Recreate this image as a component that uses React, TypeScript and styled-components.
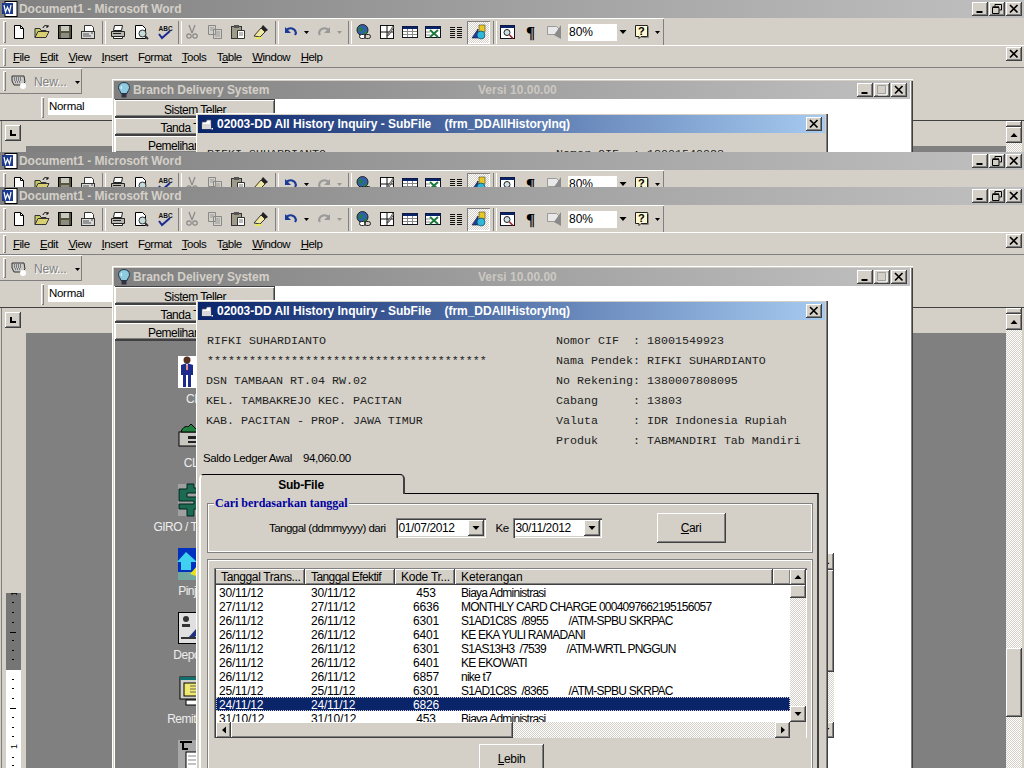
import React from "react";
import styled, { createGlobalStyle, css } from "styled-components";

const FACE = "#d4d0c8";
const GRAY = "#808080";
const UI = `"Liberation Sans", Arial, sans-serif`;

const Global = createGlobalStyle`
  html, body { margin: 0; padding: 0; background: ${FACE}; }
  * { box-sizing: border-box; }
`;

const raised = css`
  background: ${FACE};
  box-shadow: inset -1px -1px 0 #404040, inset 1px 1px 0 #fff, inset -2px -2px 0 ${GRAY};
`;
const dither = css`
  background: repeating-conic-gradient(${FACE} 0 25%, #fff 0 50%) 0 0 / 2px 2px;
`;

const Screen = styled.div`
  width: 1024px; height: 768px; overflow: hidden; display: flex; flex-direction: column;
  font-family: ${UI}; font-size: 12px; color: #000;
`;
const Slice = styled.div<{ $h: number }>`
  height: ${(p) => p.$h}px; flex: none; overflow: hidden; position: relative;
`;
const Word = styled.div`
  position: relative; width: 1024px; height: 768px; background: ${FACE}; display: flex; flex-direction: column;
`;
const TitleBar = styled.div`
  height: 18px; flex: none; display: flex; align-items: center; padding: 0 2px 0 2px;
  background: linear-gradient(90deg, #808080 0%, #c0c0c0 100%);
`;
const TitleText = styled.span`
  margin-left: 1px; font-weight: 700; font-size: 12px; color: ${FACE}; letter-spacing: -0.05px;
  flex: 1; white-space: pre;
`;
const BtnGroup = styled.div`
  display: flex; gap: 1px;
`;
const WinBtn = styled.div`
  width: 16px; height: 14px; display: flex; align-items: center; justify-content: center; ${raised}
`;
const ToolRow = styled.div`
  height: 28px; flex: none; display: flex; border-bottom: 1px solid #fff;
`;
const Toolbar = styled.div`
  width: 664px; height: 27px; display: flex; align-items: center; padding-left: 7px; position: relative;
  border-top: 1px solid #fff; box-shadow: inset -1px 0 0 ${GRAY};
`;
const Grip = styled.i<{ $h: number; $x: number }>`
  position: absolute; left: ${(p) => p.$x}px; top: 2px; width: 3px; height: ${(p) => p.$h}px;
  background: ${FACE}; box-shadow: inset 1px 1px 0 #fff, inset -1px -1px 0 ${GRAY};
`;
const Tool = styled.div<{ $w?: number; $pressed?: boolean }>`
  width: ${(p) => p.$w ?? 23}px; height: 23px; flex: none; display: flex; align-items: center; justify-content: center;
  ${(p) => p.$pressed && css`
    ${dither}
    box-shadow: inset 1px 1px 0 ${GRAY}, inset -1px -1px 0 #fff;
  `}
`;
const Pilcrow = styled.span`
  font-family: "Liberation Serif", serif; font-weight: 700; font-size: 17px; line-height: 1;
`;
const Sep = styled.i<{ $w?: number }>`
  width: ${(p) => p.$w ?? 7}px; height: 23px; flex: none; position: relative;
  &::after {
    content: ""; position: absolute; left: 3px; top: 0; bottom: 0; width: 2px;
    border-left: 1px solid ${GRAY}; border-right: 1px solid #fff;
  }
`;
const ZoomBox = styled.div`
  width: 60px; height: 17px; margin: 0 2px 0 3px; background: #fff; display: flex; align-items: center;
  font-size: 12px; padding-left: 1px; flex: none; justify-content: space-between; padding-right: 0;
`;
const ZoomArrow = styled.span`
  width: 11px; height: 17px; background: ${FACE}; display: flex; align-items: center; justify-content: center;
`;
const MenuRow = styled.div`
  height: 22px; flex: none; display: flex; align-items: center; padding-left: 13px; gap: 10.5px; position: relative;
  border-bottom: 1px solid ${GRAY}; font-size: 11.5px;
`;
const MenuItem = styled.span`
  letter-spacing: -0.5px; color: #000;
`;
const DocClose = styled(WinBtn)`
  position: absolute; right: 2px; top: 1px;
`;
const ToolbarRowThree = styled.div`
  height: 27px; flex: none; display: flex;
`;
const NewBar = styled.div`
  width: 82px; height: 26px; display: flex; align-items: center; padding-left: 11px; gap: 7px; position: relative;
  border-top: 1px solid #fff; box-shadow: inset -1px -1px 0 ${GRAY};
`;
const NewText = styled.span`
  color: ${GRAY}; text-shadow: 1px 1px 0 #fff; font-size: 12px; width: 34px; letter-spacing: -0.1px;
`;
const StyleRow = styled.div`
  height: 26px; flex: none; padding-left: 40px; border-bottom: 1px solid #404040; display: flex; align-items: flex-start; position: relative;
`;
const StyleBox = styled.div`
  margin: 3px 0 0 8px; width: 110px; height: 17px; background: #fff; padding-left: 1px; line-height: 17px; font-size: 11.5px; letter-spacing: -0.3px;
`;
const Body = styled.div`
  flex: 1; display: flex; min-height: 0; margin-left: 1px; border-left: 1px solid ${GRAY};
`;
const MainCol = styled.div`
  flex: 1; display: flex; flex-direction: column; min-width: 0;
`;
const RulerRow = styled.div`
  height: 25px; flex: none; padding: 4px 0 0 3px;
`;
const TabStop = styled.div`
  width: 16px; height: 16px; display: flex; align-items: center; justify-content: center; ${raised}
`;
const CanvasRow = styled.div`
  flex: 1; display: flex; min-height: 0;
`;
const RulerCol = styled.div`
  width: 24px; flex: none; padding: 260px 5px 0 4px;
`;
const Doc = styled.div`
  flex: 1; background: ${GRAY};
`;
const DocBar = styled.div`
  width: 18px; flex: none; padding-right: 2px; display: flex; flex-direction: column;
`;
const Split = styled.div`
  height: 6px; flex: none; ${raised}
`;
const ArrowBtn = styled.div<{ $h?: number; $w?: number }>`
  width: ${(p) => p.$w ?? 16}px; height: ${(p) => p.$h ?? 16}px; flex: none; display: flex; align-items: center; justify-content: center; ${raised}
`;
const Track = styled.div<{ $h?: number }>`
  flex: ${(p) => (p.$h ? "none" : 1)}; height: ${(p) => (p.$h ? `${p.$h}px` : "auto")}; ${dither}
`;
const Thumb = styled.div<{ $h?: number; $w?: number }>`
  flex: none; height: ${(p) => (p.$h ? `${p.$h}px` : "100%")}; width: ${(p) => (p.$w ? `${p.$w}px` : "100%")}; ${raised}
`;

/* Branch Delivery System */
const Branch = styled.div`
  position: absolute; left: 112px; top: 79px; width: 801px; height: 720px; background: #fff; padding: 2px 2px 0 2px;
  box-shadow: inset 1px 1px 0 #fff, inset 2px 2px 0 ${FACE}, inset -1px 0 0 #404040, inset -2px 0 0 ${GRAY};
`;
const BranchTitle = styled.div`
  height: 18px; display: flex; align-items: center; padding-left: 2px; position: relative;
  background: linear-gradient(90deg, #808080 0%, #c0c0c0 100%);
  margin-right: 1px;
`;
const BranchName = styled(TitleText)`
  margin-left: 1px;
`;
const Version = styled.span`
  position: absolute; left: 364px; top: 2px; font-weight: 700; color: #d4d0c8; font-size: 12px; opacity: .85;
`;
const BranchBtns = styled(BtnGroup)`
  margin-right: 3px; gap: 1px;
`;
const SidePanel = styled.div`
  width: 160px; display: flex; flex-direction: column; height: 100%;
  margin-left: 1px; background: ${GRAY}; padding-top: 0; border-top: 1px solid #404040;
`;
const SideButton = styled.div`
  height: 18px; flex: none; text-align: center; line-height: 20px; font-size: 12px; letter-spacing: -0.5px; white-space: nowrap; overflow: hidden; ${raised}
  border-bottom: 1px solid #404040;
`;
const IconList = styled.div`
  display: flex; flex-direction: column; align-items: center; padding-top: 15px;
`;
const IconItem = styled.div`
  height: 64px; width: 130px; flex: none; display: flex; flex-direction: column; align-items: center;
`;
const IconLabel = styled.div`
  margin-top: 4px; line-height: 14px; color: #eee; white-space: nowrap; font-size: 12px; letter-spacing: -0.5px;
`;
const BackBar = styled.div`
  position: absolute; left: 706px; top: 287px; width: 16px; height: 185px; display: flex; flex-direction: column;
`;

/* Dialog */
const Dialog = styled.div`
  position: absolute; left: 84px; top: 34px; width: 632px; height: 700px; background: ${FACE}; padding: 2px;
  box-shadow: inset 1px 1px 0 #fff, inset -1px -1px 0 #404040, inset -2px -2px 0 ${GRAY};
`;
const DialogTitle = styled.div`
  height: 18px; display: flex; align-items: center; padding: 0 3px 0 3px; margin-right: 1px;
  background: linear-gradient(90deg, #0a246a 0%, #a6caf0 100%);
`;
const DialogName = styled.span`
  flex: 1; margin-left: 4px; color: #fff; font-weight: 700; font-size: 12px; white-space: pre; letter-spacing: -0.02px;
`;
const InfoRow = styled.div`
  display: flex; padding: 11px 0 0 9px;
`;
const InfoCol = styled.div<{ $w?: number }>`
  width: ${(p) => (p.$w ? `${p.$w}px` : "auto")}; flex: none;
`;
const Mono = styled.div<{ $shift?: number }>`
  height: 20px; line-height: 20px; white-space: pre;
  font-family: "Liberation Mono", "Courier New", monospace; font-size: 11.67px; color: #222;
  margin-left: ${(p) => p.$shift ?? 0}px;
`;
const Saldo = styled.div`
  margin: 0 0 0 5px; height: 14px; line-height: 14px; white-space: pre; font-size: 11.5px; letter-spacing: -0.4px;
`;
const TabStrip = styled.div`
  display: flex; margin: 9px 0 0 1px;
`;
const TabHead = styled.div`
  width: 206px; height: 20px; text-align: center; line-height: 20px; font-weight: 700; font-size: 12px; letter-spacing: -0.2px; position: relative; z-index: 1;
  background: ${FACE}; border-top: 1px solid #000; border-left: 2px solid #fff; border-right: 2px solid #404040;
  border-radius: 5px 5px 0 0; padding-right: 2px;
`;
const TabPanel = styled.div`
  width: 620px; margin: -1px 0 0 1px; height: 400px; padding: 9px 4px 0 6px;
  border-top: 1px solid #000; border-left: 2px solid #fff; border-right: 2px solid #404040;
`;
const Group = styled.div<{ $h?: number; $mt?: number }>`
  position: relative; height: ${(p) => p.$h ?? 400}px; margin-top: ${(p) => p.$mt ?? 0}px;
  border: 1px solid ${GRAY}; outline: 1px solid #fff; outline-offset: -2px;
`;
const Legend = styled.span`
  position: absolute; left: 6px; top: -7px; padding: 0 1px; background: ${FACE};
  font-family: "Liberation Serif", serif; font-weight: 700; font-size: 12px; color: #0000a0; line-height: 13px;
`;
const SearchRow = styled.div`
  height: 100%; display: flex; align-items: center; padding-left: 61px; font-size: 11.5px;
`;
const Label = styled.span<{ $ml?: number }>`
  margin-left: ${(p) => p.$ml ?? 0}px; white-space: pre; letter-spacing: -0.52px;
`;
const Combo = styled.div<{ $w: number; $ml: number }>`
  width: ${(p) => p.$w}px; margin-left: ${(p) => p.$ml}px; height: 20px; background: #fff; display: flex; align-items: center; justify-content: space-between; padding: 2px;
  box-shadow: inset 1px 1px 0 ${GRAY}, inset 2px 2px 0 #404040, inset -1px -1px 0 #fff, inset -2px -2px 0 ${FACE};
  font-size: 12px; letter-spacing: -0.4px;
`;
const ComboText = styled.span`
  padding-left: 1px;
`;
const Push = styled.button<{ $ml: number; $w: number }>`
  margin-left: ${(p) => p.$ml}px; width: ${(p) => p.$w}px; height: 30px; border: 0; padding: 0; flex: none;
  font-family: ${UI}; font-size: 12px; letter-spacing: -0.4px; color: #000; ${raised}
`;
const ListFrame = styled.div`
  margin: 8px 0 0 6px; width: 593px; height: 170px; padding: 1px 1px 0 2px; display: grid;
  grid-template-columns: 1fr 16px; grid-template-rows: 1fr 16px;
  box-shadow: inset 1px 1px 0 ${GRAY}, inset 2px 2px 0 #404040, inset -1px -1px 0 #fff;
`;
const ListArea = styled.div`
  min-width: 0; min-height: 0; overflow: hidden; background: #fff;
`;
const HeadRow = styled.div`
  display: flex; height: 16px; background: ${FACE}; margin-left: -1px;
`;
const Head = styled.div<{ $w: number; $ls?: number }>`
  width: ${(p) => p.$w}px; flex: none; height: 16px; padding-left: 6px; line-height: 16px; white-space: pre; letter-spacing: ${(p) => p.$ls ?? -0.25}px; ${raised}
`;
const Rows = styled.div`
  height: 137px; overflow: hidden;
`;
const Row = styled.div<{ $sel?: boolean }>`
  height: 14px; line-height: 16px; display: grid; grid-template-columns: 90px 90px 60px 1fr; white-space: pre;
  ${(p) => p.$sel && css`
    background: #0a246a; color: #fff; outline: 1px dotted #d4d0c8; outline-offset: -1px;
  `}
`;
const Cell = styled.span<{ $pad?: number; $center?: boolean; $ls?: number }>`
  padding-left: ${(p) => p.$pad ?? 0}px; ${(p) => p.$center && "text-align: center;"}
  letter-spacing: ${(p) => p.$ls ?? -0.2}px;
`;
const VBar = styled.div`
  display: flex; flex-direction: column; min-height: 0;
`;
const HBar = styled.div`
  display: flex; height: 16px;
`;
const Corner = styled.div`
  background: ${FACE};
`;
const MoreRow = styled.div`
  padding: 6px 0 0 271px;
`;
const RulerStrip = styled.svg`
  display: block;
`;
const Ico = styled.svg`
  display: block; flex: none; overflow: visible;
`;

type P = { children: React.ReactNode; s?: number };
const S = ({ children, s = 16 }: P) => <Ico width={s} height={s} viewBox={`0 0 ${s} ${s}`}>{children}</Ico>;

const MinG = () => <S s={8}><rect x="0.5" y="6" width="6" height="2" fill="#000" /></S>;
const RestG = () => <S s={10}><path d="M3 .5h6.5v5.5H7.5M3 .5v2M.5 3.5h6.5v6H.5zM.5 2.8h6.5" fill="none" stroke="#000" /></S>;
const MaxG = () => <S s={10}><path d="M.5.5h8v8h-8z" fill="none" stroke="#a0a0a0" /><path d="M1 10h9V1" fill="none" stroke="#fff" /></S>;
const CloseG = () => <S s={10}><path d="M1 1l7.5 7.5M8.5 1L1 8.5" stroke="#000" strokeWidth="1.7" /></S>;
const Up = () => <S s={8}><path d="M4 2L7.5 6H.5z" /></S>;
const Down = () => <S s={8}><path d="M4 6L7.5 2H.5z" /></S>;
const LeftA = () => <S s={8}><path d="M2 4L6 .5v7z" /></S>;
const RightA = () => <S s={8}><path d="M6 4L2 .5v7z" /></S>;
const Drop = ({ c = "#000" }: { c?: string }) => <S s={6}><path d="M0 2h5L2.5 5z" fill={c} /></S>;

const IWord = () => <S><rect x="3" y="0.5" width="12" height="15" fill="#fff" stroke="#000" /><rect x="0" y="2" width="11" height="11" fill="#1c3a8c" /><path d="M2 4l1.5 7L5.5 6l2 5L9 4" fill="none" stroke="#fff" strokeWidth="1.2" /></S>;
const INew = () => <S><path d="M3.5 1.5h6l3 3v10h-9z" fill="#fff" stroke="#000" /><path d="M9.5 1.5v3h3" fill="none" stroke="#000" /></S>;
const IOpen = () => <S><path d="M1 13.5V4.5h5l1 2h5v2" fill="#c8c860" stroke="#333" /><path d="M1 13.5l3-6h11l-3 6z" fill="#d8d070" stroke="#333" /><path d="M9 4c1-3 3-3 5-1.5M14 1v2h-2" fill="none" stroke="#000" /></S>;
const ISave = () => <S><rect x="1.5" y="1.5" width="13" height="13" fill="#55553c" stroke="#000" /><rect x="4" y="2" width="8" height="5" fill="#c8c8c0" /><rect x="4" y="9" width="8" height="5" fill="#8c8c84" /></S>;
const IMail = () => <S><path d="M4.5 1.5h7l2 2v5h-9z" fill="#fff" stroke="#333" /><rect x="1.5" y="7.5" width="13" height="7" fill="#d8d8d8" stroke="#333" /><path d="M3 10h6M3 12h8M11 9h2" stroke="#555" /></S>;
const IPrint = () => <S><path d="M4.5 1.5h8l-1 5h-8z" fill="#fff" stroke="#222" /><path d="M1.5 7.5h13v5h-13z" fill="#b8b8b0" stroke="#222" /><path d="M3.5 12.5h9v2h-9z" fill="#fff" stroke="#222" /><path d="M3 9.5h8" stroke="#222" /></S>;
const IPreview = () => <S><path d="M2.5 1.5h7l3 3v10h-10z" fill="#fff" stroke="#000" /><circle cx="9.5" cy="9.5" r="3.5" fill="#c4dcdc" stroke="#333" /><path d="M12 12l3 3" stroke="#333" strokeWidth="2" /></S>;
const ISpell = () => <S><text x="2.5" y="6.5" fontFamily="Liberation Sans" fontSize="6.5" fontWeight="700" fill="#111">ABC</text><path d="M3 10l3 4 8-7" fill="none" stroke="#1a2a90" strokeWidth="2" /></S>;
const ICut = () => <S><path d="M5 1l3 8M11 1L8 9" stroke="#888" strokeWidth="1.2" /><circle cx="5" cy="12" r="2.2" fill="none" stroke="#888" strokeWidth="1.2" /><circle cx="11" cy="12" r="2.2" fill="none" stroke="#888" strokeWidth="1.2" /></S>;
const ICopy = () => <S><path d="M1.5 1.5h7v9h-7zM6.5 5.5h8v9h-8z" fill={FACE} stroke="#888" /><path d="M3 4h4M3 6h3M8 8h5M8 10h5M8 12h5" stroke="#999" /></S>;
const IPaste = () => <S><rect x="1.5" y="2.5" width="10" height="12" fill="#a09a88" stroke="#333" /><rect x="4" y="1" width="5" height="3" fill="#555" /><path d="M7.5 6.5h7v8h-7z" fill="#fff" stroke="#333" /><path d="M9 9h4M9 11h4" stroke="#777" /></S>;
const IBrush = () => <S><path d="M10 1l5 5-3 2-4-4z" fill="#222" /><path d="M8 4l4 4-5 5-6-1z" fill="#f0e8a0" stroke="#333" /><path d="M2 14h7" stroke="#e8e860" strokeWidth="2" /></S>;
const IUndo = () => <S><path d="M3 6c4-3 9-2 10 3l-1 2" fill="none" stroke="#1a3a98" strokeWidth="2" /><path d="M2 3v6h6z" fill="#1a3a98" /></S>;
const IRedo = () => <S><path d="M13 6c-4-3-9-2-10 3l1 2" fill="none" stroke="#999" strokeWidth="2" /><path d="M14 3v6H8z" fill="#999" /></S>;
const IWeb = () => <S><circle cx="6.5" cy="6" r="5.5" fill="#3060a8" stroke="#222" /><path d="M3 3l4 1-1 3-3 1zM8 8l2-1 1 2-3 2z" fill="#208040" /><rect x="3.5" y="10.5" width="6" height="4" rx="2" fill="#fff" stroke="#222" /><rect x="8.5" y="10.5" width="6" height="4" rx="2" fill="none" stroke="#222" /></S>;
const ITables = () => <S><rect x="1.5" y="1.5" width="13" height="13" fill="#fff" stroke="#111" /><path d="M8 1.5v13M1.5 8h13" stroke="#111" /><path d="M9 10l5-8 1 1-5 8-2 1z" fill={FACE} stroke="#222" strokeWidth=".7" /></S>;
const ITable = () => <S><rect x="0.5" y="2.5" width="15" height="11" fill="#fff" stroke="#112" /><rect x="0.5" y="2.5" width="15" height="2.5" fill="#0a246a" /><path d="M5.5 5v8M10.5 5v8M1 7.5h14M1 10.5h14" stroke="#888" /></S>;
const IExcel = () => <S><rect x="0.5" y="2.5" width="15" height="11" fill="#fff" stroke="#112" /><rect x="0.5" y="2.5" width="15" height="2.5" fill="#0a246a" /><path d="M5 6l8 7M13 6l-8 7" stroke="#1c7a3c" strokeWidth="2" /><path d="M1 8h4M1 11h4" stroke="#888" /></S>;
const IColumns = () => <S><path d="M2 3.5h5M9 3.5h5M2 5.5h5M9 5.5h5M2 7.5h5M9 7.5h5M2 9.5h5M9 9.5h5M2 11.5h5M9 11.5h5M2 13.5h5M9 13.5h5" stroke="#111" /></S>;
const IDraw = () => <S><path d="M8 1h6v7H8z" fill="#e8c820" stroke="#443" strokeWidth=".6" /><path d="M1 14l6-9v9z" fill="#2040a0" stroke="#112" strokeWidth=".6" /><circle cx="10" cy="11" r="4" fill="#30b8d8" stroke="#135" strokeWidth=".6" /></S>;
const IDocMap = () => <S><rect x="0.5" y="1.5" width="14" height="13" fill="#fff" stroke="#112" /><rect x="0.5" y="1.5" width="14" height="2.5" fill="#0a246a" /><circle cx="7" cy="8.5" r="3" fill="#cfe0e8" stroke="#222" /><path d="M9.5 11l3.5 3.5" stroke="#a02020" strokeWidth="1.6" /></S>;
const IGrayZoom = () => <S><path d="M1.5 2.5h9l2 2v6h-11z" fill="#e8e8e8" stroke="#9a9a9a" /><path d="M15 1v14l-7-4z" fill="#8a8a8a" /></S>;
const IHelp = () => <S><path d="M1.5 1.5h12v11H7l-2 2v-2H1.5z" fill="#fdf8d0" stroke="#222" /><path d="M13.5 2.5h1v11h-7" fill="none" stroke="#888" /><text x="4" y="11" fontFamily="Liberation Sans" fontWeight="700" fontSize="11" fill="#000">?</text></S>;
const IKeyboard = () => <S><path d="M1 2l12 0 1 6-3 3H3L1 7z" fill="#c8c8c8" stroke="#333" /><path d="M3 4h8M3 6h8M4 8h6" stroke="#333" strokeDasharray="1 1" /><circle cx="12" cy="12" r="3" fill="#fff" /></S>;
const IChevron = () => <S s={6}><path d="M0 2h5L2.5 5z" /></S>;
const IBulb = () => <S><path d="M8 0.5c-3.5 0-5.5 2.5-5.5 5 0 2.5 2 3.5 2.5 6h6c.5-2.5 2.5-3.5 2.5-6 0-2.5-2-5-5.5-5z" fill="#8ecae0" stroke="#234" /><path d="M6 4c-1 1-1 2-.5 3" stroke="#fff" fill="none" /><rect x="5.5" y="12" width="5" height="3.5" fill="#334" /></S>;
const IFolder = () => <S s={12}><path d="M1 4h4l1-2h4v9H1z" fill="#fff" stroke="#556" strokeWidth=".7" /><path d="M1 6h9v5H1z" fill="#d8d8d8" /><rect x="10.5" y="10" width="1.5" height="1.5" fill="#fff" /></S>;

const S32 = ({ children }: { children: React.ReactNode }) => <Ico width={34} height={32} viewBox="0 0 34 32">{children}</Ico>;
const PMan = () => <S32><rect x="0" y="0" width="34" height="32" fill="#fff" /><circle cx="9" cy="4" r="3.5" fill="#553020" /><path d="M3 9l6-2 6 2v10h-2v12H10V19H8v12H5V19H3z" fill="#1c2a8c" /><path d="M8 8h2v6H8z" fill="#fff" /><path d="M8.5 8.5h1v6h-1z" fill="#c02020" /></S32>;
const PCl = () => <S32><rect x="1" y="12" width="32" height="14" fill="#c8c8c0" stroke="#000" /><path d="M3 12c2-6 6-6 7-5l3-3 5 5 6-1 6 4z" fill="#208040" stroke="#000" /><rect x="10" y="16" width="14" height="3" fill="#222" /><rect x="10" y="21" width="14" height="2" fill="#222" /></S32>;
const PGiro = () => <S32><rect x="0" y="0" width="34" height="32" fill="#a0a0a0" /><path d="M9 0h7v4h8v5H9v4h15v12h-8v7H9v-7H1v-5h15v-3H1V5h8z" fill="#1c6a50" stroke="#022" /></S32>;
const PPinja = () => <S32><rect x="0" y="0" width="34" height="32" fill="#0030c0" /><rect x="0" y="24" width="34" height="8" fill="#70a8a0" /><path d="M8 4l11 10h-6v8H3v-8h-4z" fill="#40d0f0" /><path d="M12 26l16-18 4 4-14 16z" fill="#e8e020" /></S32>;
const PDep = () => <S32><rect x="0.5" y="0.5" width="33" height="31" fill="#e0e0e0" stroke="#000" /><circle cx="8" cy="7" r="3" fill="#333" /><path d="M4 12h8v3H4z" fill="#333" /><path d="M10 26L26 8l4 2-14 16z" fill="#203080" /><path d="M3 26h26" stroke="#333" strokeWidth="2" /></S32>;
const PRemit = () => <S32><rect x="2" y="1" width="30" height="22" fill="#d0d0c8" stroke="#000" /><rect x="2" y="1" width="30" height="3" fill="#107070" /><rect x="6" y="7" width="22" height="13" fill="#f0e870" stroke="#000" /><path d="M12 10h12M12 13h12M12 16h12" stroke="#665" /><rect x="8" y="24" width="18" height="5" fill="#fff" stroke="#000" /></S32>;
const PLast = () => <S32><rect x="0" y="0" width="34" height="32" fill="#a8a8a8" /><path d="M2 2h12M5 2v7h5" stroke="#000" strokeWidth="2" fill="none" /><rect x="8" y="12" width="18" height="20" fill="#fff" stroke="#000" /><path d="M10 16h14M10 20h14M10 24h14" stroke="#888" /></S32>;

const rulerMarks = [9, 19, 29, 39, 47, 57, 66, 86, 95, 105, 115, 124, 134, 143, 164, 172];
const longMarks = [39, 115];

const VRuler = () => (
  <RulerStrip width="15" height="182" viewBox="0 0 15 182">
    <rect x="0" y="0" width="15" height="77" fill="#757575" />
    <rect x="0" y="77" width="15" height="105" fill="#fff" />
    {rulerMarks.map((y) => {
      const long = longMarks.includes(y);
      return <rect key={y} x={long ? 4 : 6} y={y} width={long ? 6 : 2} height="1" fill="#000" />;
    })}
    <text x="0" y="0" transform="translate(11 3) rotate(-90)" fontFamily="Liberation Sans" fontSize="9" fill="#000">1</text>
    <text x="0" y="0" transform="translate(11 156) rotate(-90)" fontFamily="Liberation Sans" fontSize="9" fill="#000">1</text>
  </RulerStrip>
);

const menu: [string, string, string][] = [
  ["", "F", "ile"], ["", "E", "dit"], ["", "V", "iew"], ["", "I", "nsert"], ["F", "o", "rmat"],
  ["", "T", "ools"], ["T", "a", "ble"], ["", "W", "indow"], ["", "H", "elp"],
];

const rows: [string, string, string, string][] = [
  ["30/11/12", "30/11/12", "453", "Biaya Administrasi"],
  ["27/11/12", "27/11/12", "6636", "MONTHLY CARD CHARGE 0004097662195156057"],
  ["26/11/12", "26/11/12", "6301", "S1AD1C8S  /8955        /ATM-SPBU SKRPAC"],
  ["26/11/12", "26/11/12", "6401", "KE EKA YULI RAMADANI"],
  ["26/11/12", "26/11/12", "6301", "S1AS13H3  /7539        /ATM-WRTL PNGGUN"],
  ["26/11/12", "26/11/12", "6401", "KE EKOWATI"],
  ["26/11/12", "26/11/12", "6857", "nike t7"],
  ["25/11/12", "25/11/12", "6301", "S1AD1C8S  /8365        /ATM-SPBU SKRPAC"],
  ["24/11/12", "24/11/12", "6826", ""],
  ["31/10/12", "31/10/12", "453", "Biaya Administrasi"],
];

const panelIcons: [React.ReactNode, string][] = [
  [<PMan />, "CIF"], [<PCl />, "CLR"], [<PGiro />, "GIRO / TABUNG"], [<PPinja />, "Pinjam"],
  [<PDep />, "Deposito"], [<PRemit />, "Remittance"], [<PLast />, ""],
];

const HistoryDialog = () => (
  <Dialog>
    <DialogTitle>
      <IFolder />
      <DialogName>{"02003-DD All History Inquiry - SubFile    (frm_DDAllHistoryInq)"}</DialogName>
      <WinBtn><CloseG /></WinBtn>
    </DialogTitle>
    <InfoRow>
      <InfoCol $w={349}>
        <Mono>RIFKI SUHARDIANTO</Mono>
        <Mono>****************************************</Mono>
        <Mono $shift={-1}>DSN TAMBAAN RT.04 RW.02</Mono>
        <Mono $shift={-1}>KEL. TAMBAKREJO KEC. PACITAN</Mono>
        <Mono $shift={-1}>KAB. PACITAN - PROP. JAWA TIMUR</Mono>
      </InfoCol>
      <InfoCol>
        <Mono>Nomor CIF  : 18001549923</Mono>
        <Mono>Nama Pendek: RIFKI SUHARDIANTO</Mono>
        <Mono>No Rekening: 1380007808095</Mono>
        <Mono>Cabang     : 13803</Mono>
        <Mono>Valuta     : IDR Indonesia Rupiah</Mono>
        <Mono>Produk     : TABMANDIRI Tab Mandiri</Mono>
      </InfoCol>
    </InfoRow>
    <Saldo>{"Saldo Ledger Awal    94,060.00"}</Saldo>
    <TabStrip><TabHead>Sub-File</TabHead></TabStrip>
    <TabPanel>
      <Group $h={50}>
        <Legend>Cari berdasarkan tanggal</Legend>
        <SearchRow>
          <Label>Tanggal (ddmmyyyy) dari</Label>
          <Combo $w={90} $ml={10}><ComboText>01/07/2012</ComboText><ArrowBtn><Down /></ArrowBtn></Combo>
          <Label $ml={10}>Ke</Label>
          <Combo $w={89} $ml={4}><ComboText>30/11/2012</ComboText><ArrowBtn><Down /></ArrowBtn></Combo>
          <Push $ml={55} $w={69}><u>C</u>ari</Push>
        </SearchRow>
      </Group>
      <Group $mt={6}>
        <ListFrame>
          <ListArea>
            <HeadRow>
              <Head $w={90} $ls={-0.37}>Tanggal Trans...</Head>
              <Head $w={90} $ls={-0.58}>Tanggal Efektif</Head>
              <Head $w={60}>Kode Tr...</Head>
              <Head $w={318} $ls={-0.05}>Keterangan</Head>
              <Head $w={18} />
            </HeadRow>
            <Rows>
              {rows.map((r, i) => (
                <Row key={i} $sel={i === 8}>
                  <Cell $pad={3}>{r[0]}</Cell>
                  <Cell $pad={5}>{r[1]}</Cell>
                  <Cell $center>{r[2]}</Cell>
                  <Cell $pad={5} $ls={-0.75}>{r[3]}</Cell>
                </Row>
              ))}
            </Rows>
          </ListArea>
          <VBar>
            <ArrowBtn><Up /></ArrowBtn>
            <Thumb $h={13} />
            <Track />
            <ArrowBtn><Down /></ArrowBtn>
          </VBar>
          <HBar>
            <ArrowBtn $w={15}><LeftA /></ArrowBtn>
            <Thumb $w={282} />
            <Track />
            <ArrowBtn $w={15}><RightA /></ArrowBtn>
          </HBar>
          <Corner />
        </ListFrame>
        <MoreRow><Push $ml={0} $w={65}><u>L</u>ebih</Push></MoreRow>
      </Group>
    </TabPanel>
  </Dialog>
);

const BranchWindow = () => (
  <Branch>
    <BranchTitle>
      <IBulb />
      <BranchName>Branch Delivery System</BranchName>
      <Version>Versi 10.00.00</Version>
      <BranchBtns>
        <WinBtn><MinG /></WinBtn>
        <WinBtn><MaxG /></WinBtn>
        <WinBtn><CloseG /></WinBtn>
      </BranchBtns>
    </BranchTitle>
    <SidePanel>
      <SideButton>Sistem Teller</SideButton>
      <SideButton>Tanda Tangan</SideButton>
      <SideButton>Pemeliharaan Data</SideButton>
      <IconList>
        {panelIcons.map(([icon, label], i) => (
          <IconItem key={i}>
            {icon}
            <IconLabel>{label}</IconLabel>
          </IconItem>
        ))}
      </IconList>
    </SidePanel>
    <BackBar>
      <ArrowBtn $h={17}><Up /></ArrowBtn>
      <Thumb $h={102} />
      <Track />
      <ArrowBtn><Down /></ArrowBtn>
    </BackBar>
    <HistoryDialog />
  </Branch>
);

const WordWindow = () => (
  <Word>
    <TitleBar>
      <IWord />
      <TitleText>Document1 - Microsoft Word</TitleText>
      <BtnGroup>
        <WinBtn><MinG /></WinBtn>
        <WinBtn><RestG /></WinBtn>
        <WinBtn><CloseG /></WinBtn>
      </BtnGroup>
    </TitleBar>
    <ToolRow>
      <Toolbar>
        <Grip $x={3} $h={22} />
        <Tool><INew /></Tool><Tool><IOpen /></Tool><Tool><ISave /></Tool><Tool><IMail /></Tool>
        <Sep />
        <Tool><IPrint /></Tool><Tool><IPreview /></Tool><Tool><ISpell /></Tool>
        <Sep $w={5} />
        <Tool><ICut /></Tool><Tool><ICopy /></Tool><Tool><IPaste /></Tool><Tool><IBrush /></Tool>
        <Sep />
        <Tool><IUndo /></Tool><Tool $w={10}><Drop /></Tool><Tool><IRedo /></Tool><Tool $w={10}><Drop c="#999" /></Tool>
        <Sep />
        <Tool><IWeb /></Tool><Tool><ITables /></Tool><Tool><ITable /></Tool><Tool><IExcel /></Tool><Tool><IColumns /></Tool>
        <Tool $pressed><IDraw /></Tool>
        <Sep $w={6} />
        <Tool><IDocMap /></Tool><Tool><Pilcrow>¶</Pilcrow></Tool><Tool><IGrayZoom /></Tool>
        <ZoomBox>80%<ZoomArrow><Down /></ZoomArrow></ZoomBox>
        <Tool><IHelp /></Tool>
        <Tool $w={10}><IChevron /></Tool>
      </Toolbar>
    </ToolRow>
    <MenuRow>
      <Grip $x={3} $h={18} />
      {menu.map(([a, u, b]) => (
        <MenuItem key={a + u + b}>{a}<u>{u}</u>{b}</MenuItem>
      ))}
      <DocClose><CloseG /></DocClose>
    </MenuRow>
    <ToolbarRowThree>
      <NewBar>
        <Grip $x={3} $h={20} />
        <IKeyboard />
        <NewText>New...</NewText>
        <IChevron />
      </NewBar>
    </ToolbarRowThree>
    <StyleRow>
      <Grip $x={41} $h={21} />
      <StyleBox>Normal</StyleBox>
    </StyleRow>
    <Body>
      <MainCol>
        <RulerRow><TabStop><S s={8}><path d="M2 1v5h5" fill="none" stroke="#000" strokeWidth="2" /></S></TabStop></RulerRow>
        <CanvasRow>
          <RulerCol><VRuler /></RulerCol>
          <Doc />
        </CanvasRow>
      </MainCol>
      <DocBar>
        <Split />
        <ArrowBtn><Up /></ArrowBtn>
        <Track $h={318} />
        <Thumb $h={69} />
        <Track />
      </DocBar>
    </Body>
    <BranchWindow />
  </Word>
);

export default function App() {
  return (
    <Screen>
      <Global />
      <Slice $h={152}><WordWindow /></Slice>
      <Slice $h={35}><WordWindow /></Slice>
      <Slice $h={581}><WordWindow /></Slice>
    </Screen>
  );
}
